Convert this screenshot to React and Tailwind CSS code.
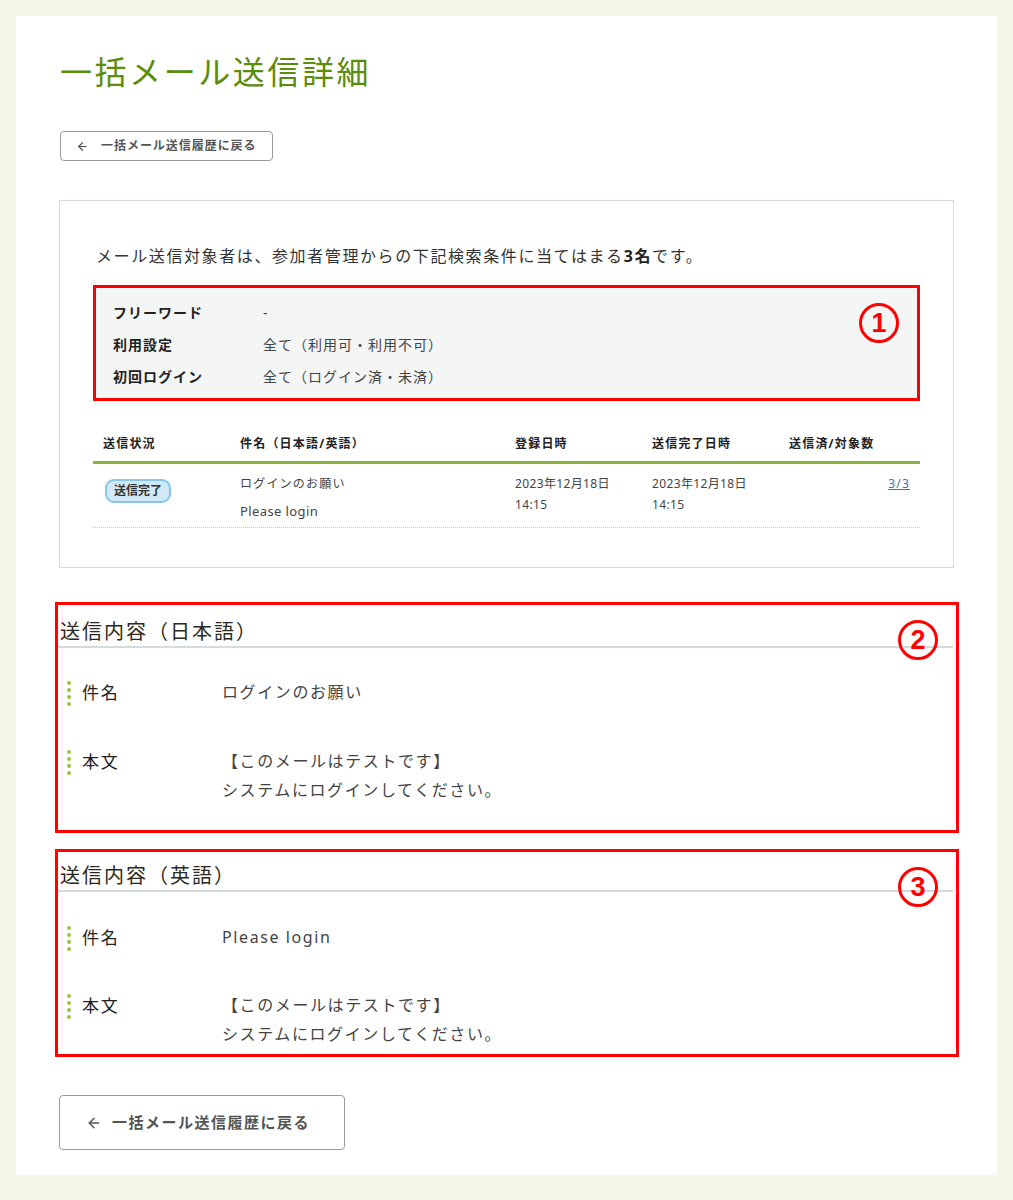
import React from "react";
import { ArrowLeft } from "lucide-react";

const FONT = { fontFamily: '"Noto Sans", "Noto Sans CJK JP", sans-serif' };

const filters = [
  { label: "フリーワード", value: "-" },
  { label: "利用設定", value: "全て（利用可・利用不可）" },
  { label: "初回ログイン", value: "全て（ログイン済・未済）" },
];

const Marker = ({ n }) => (
  <div className="absolute right-[18px] top-[15px] w-[40px] h-[40px] rounded-full border-[3.5px] border-[#ff0000] flex items-center justify-center">
    <span className="text-[#ff0000] text-[27px] font-bold leading-none" style={{ fontFamily: '"Liberation Sans", sans-serif' }}>
      {n}
    </span>
  </div>
);

const Dots = () => (
  <div className="flex flex-col gap-[3px] w-[4px] mt-[2px]">
    <span className="w-[4px] h-[4px] rounded-full bg-[#9dc43a]" />
    <span className="w-[4px] h-[4px] rounded-full bg-[#9dc43a]" />
    <span className="w-[4px] h-[4px] rounded-full bg-[#9dc43a]" />
    <span className="w-[4px] h-[4px] rounded-full bg-[#9dc43a]" />
  </div>
);

const ContentRow = ({ label, children, className }) => (
  <div className={`flex items-start ${className}`}>
    <div className="flex items-center w-[164px] pl-[9px]">
      <Dots />
      <span className="ml-[11px] text-[17px] leading-[29px] tracking-[0.1em] text-[#222]">{label}</span>
    </div>
    <div className="text-[16px] leading-[29px] tracking-[0.1em] text-[#444]">{children}</div>
  </div>
);

const ContentSection = ({ title, n, subject, pad }) => (
  <section className={`relative border-[3px] border-[#ff0000] -ml-[4px] -mr-[5px] ${pad.box}`}>
    <h2 className="mr-[3px] pl-[2px] border-b-2 border-[#d3dcdc] text-[20px] leading-[28px] tracking-[0.1em] text-[#2a2a22]">
      {title}
    </h2>
    <ContentRow label="件名" className={pad.first}>{subject}</ContentRow>
    <ContentRow label="本文" className={pad.second}>
      <div>【このメールはテストです】</div>
      <div>システムにログインしてください。</div>
    </ContentRow>
    <Marker n={n} />
  </section>
);

const App = () => {
  return (
    <div className="min-h-screen bg-[#f3f7e6] p-4" style={FONT}>
      <div className="bg-white px-[43px] pt-[33px] pb-[25px]">

        {/* TITLE */}
        <h1 className="text-[32px] leading-[46px] tracking-[0.08em] text-[#5b8c0c] pl-[1px]">
          一括メール送信詳細
        </h1>

        <button className="mt-[36px] ml-[1px] h-[30px] w-[213px] flex items-center border border-[#9a9a9a] rounded-[4px] pl-[15px] text-[#555]">
          <ArrowLeft size={13} strokeWidth={2.2} />
          <span className="ml-[12px] text-[12px] font-bold tracking-[0.08em]">一括メール送信履歴に戻る</span>
        </button>

        {/* TARGET CARD */}
        <div className="mt-[39px] border border-[#d5dbdb] px-[33px] pt-[43px] pb-[39px]">
          <p className="pl-[3px] text-[16px] leading-[24px] tracking-[0.1em] text-[#333]">
            メール送信対象者は、参加者管理からの下記検索条件に当てはまる<b className="text-[#222]">3名</b>です。
          </p>

          <div className="relative mt-[17px] border-[3px] border-[#ff0000] bg-[#f4f6f5] pt-[8px] pb-[6px]">
            {filters.map(f => (
              <div key={f.label} className="flex items-center h-[32px] pl-[17px] text-[14px] tracking-[1px]">
                <span className="w-[150px] font-bold text-[#222]">{f.label}</span>
                <span className="text-[#444]">{f.value}</span>
              </div>
            ))}
            <Marker n="1" />
          </div>

          {/* HISTORY TABLE */}
          <div className="mt-[22px] text-[12px] tracking-[0.1em]">
            <div className="grid grid-cols-[137px_275px_137px_137px_1fr] border-b-[3px] border-[#8db43c] font-bold text-[#222] leading-[18px]">
              <div className="pl-[10px] pt-[12px] pb-[8px]">送信状況</div>
              <div className="pl-[10px] pt-[12px] pb-[8px]">件名（日本語/英語）</div>
              <div className="pl-[10px] pt-[12px] pb-[8px]">登録日時</div>
              <div className="pl-[10px] pt-[12px] pb-[8px]">送信完了日時</div>
              <div className="pl-[10px] pt-[12px] pb-[8px]">送信済/対象数</div>
            </div>
            <div className="grid grid-cols-[137px_275px_137px_137px_1fr] border-b border-dotted border-[#c8c8c8] h-[64px] text-[#444]">
              <div className="pl-[12px] pt-[15px]">
                <span className="inline-flex items-center h-[24px] px-[7px] rounded-[9px] border-2 border-[#86c6ee] bg-[#cfe9f9] font-bold text-[#333] text-[12px] tracking-normal">
                  送信完了
                </span>
              </div>
              <div className="pl-[10px] pt-[8px] leading-[24px]">
                <div>ログインのお願い</div>
                <div className="mt-[3px] text-[13px] tracking-[0.03em]">Please login</div>
              </div>
              <div className="pl-[10px] pt-[9px] leading-[21px] tracking-[0.03em]">
                <div>2023年12月18日</div>
                <div>14:15</div>
              </div>
              <div className="pl-[10px] pt-[9px] leading-[21px] tracking-[0.03em]">
                <div>2023年12月18日</div>
                <div>14:15</div>
              </div>
              <div className="pr-[10px] pt-[9px] leading-[21px] text-right">
                <a href="#" className="text-[#3b6cc6] underline">3/3</a>
              </div>
            </div>
          </div>
        </div>

        {/* CONTENT SECTIONS */}
        <div className="mt-[34px]">
          <ContentSection
            title="送信内容（日本語）"
            n="2"
            subject="ログインのお願い"
            pad={{ box: "pt-[13px] pb-[25px]", first: "mt-[30px]", second: "mt-[40px]" }}
          />
        </div>
        <div className="mt-[16px]">
          <ContentSection
            title="送信内容（英語）"
            n="3"
            subject="Please login"
            pad={{ box: "pt-[10px] pb-[5px]", first: "mt-[31px]", second: "mt-[39px]" }}
          />
        </div>

        <button className="mt-[38px] h-[55px] w-[286px] flex items-center border border-[#9a9a9a] rounded-[4px] pl-[26px] text-[#555]">
          <ArrowLeft size={16} strokeWidth={2.2} />
          <span className="ml-[10px] text-[15px] font-bold tracking-[0.1em]">一括メール送信履歴に戻る</span>
        </button>
      </div>
    </div>
  );
};

export default App;
